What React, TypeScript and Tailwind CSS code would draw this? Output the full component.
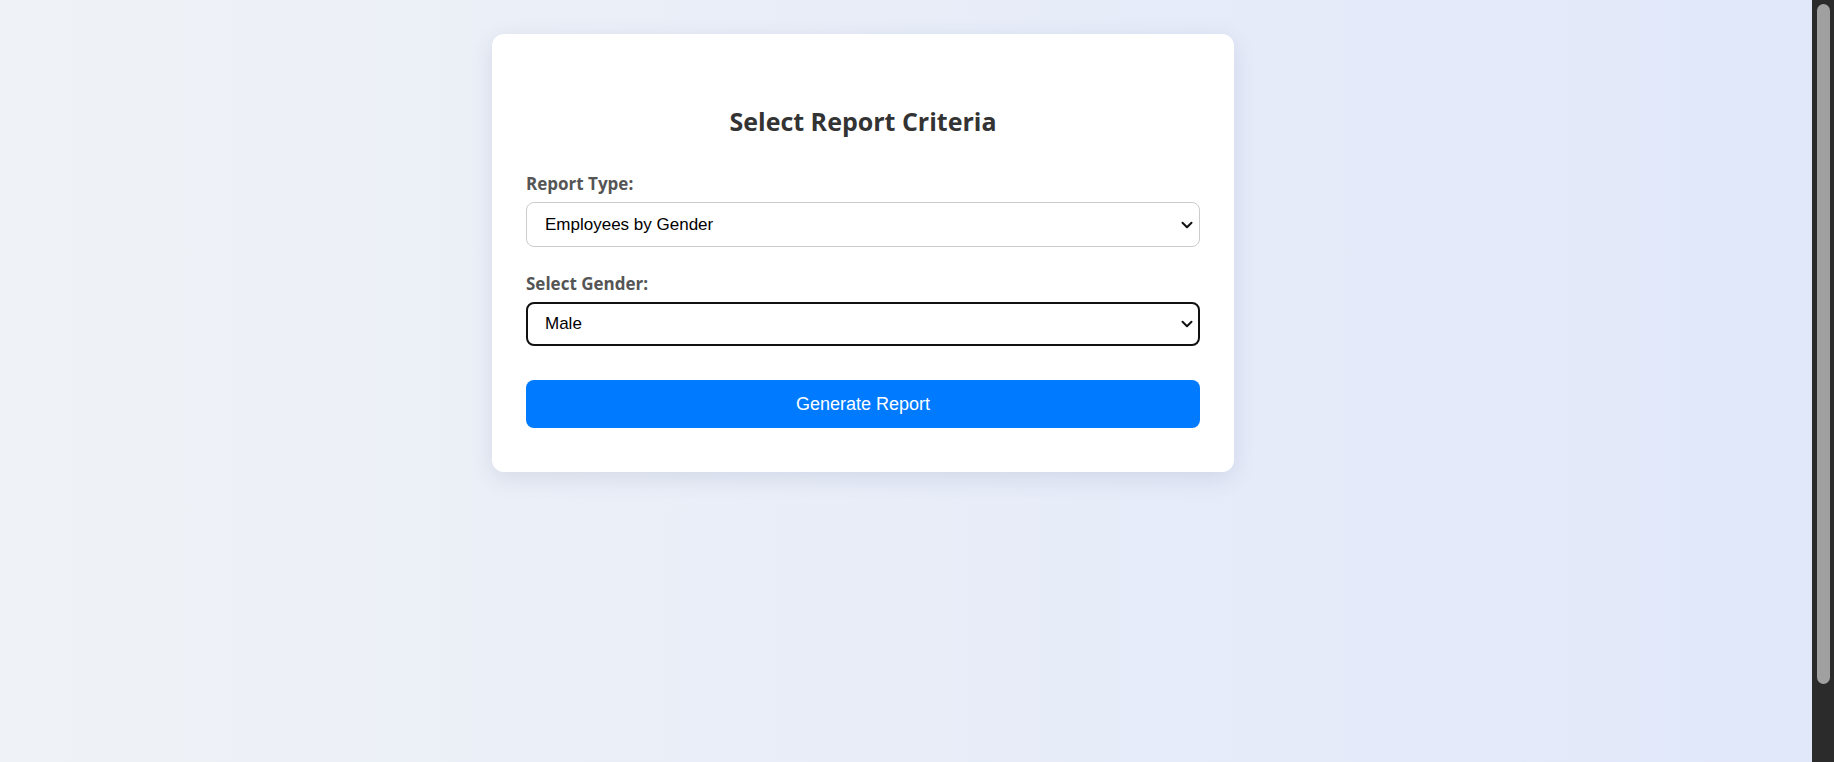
import { useState } from "react";

const Chevron = () => (
  <svg
    className="pointer-events-none absolute right-[7px] top-1/2 -translate-y-1/2"
    width="12"
    height="8"
    viewBox="0 0 12 8"
    fill="none"
  >
    <path d="M1.5 1.8 6 6.2 10.5 1.8" stroke="#111" strokeWidth="2" strokeLinecap="round" strokeLinejoin="round" />
  </svg>
);

const App = () => {
  const [reportType, setReportType] = useState("gender");
  const [gender, setGender] = useState("Male");

  return (
    <div className="flex h-screen overflow-hidden">
      <div className="flex-1 bg-linear-to-r from-[#eff2f6] to-[#e1e8fa] pt-[34px] font-['Open_Sans',sans-serif]">
        <div className="ml-[492px] w-[742px] rounded-xl bg-white px-[34px] pt-[71px] pb-[44px] shadow-[0_6px_22px_rgba(60,80,120,0.13)]">
          <h2 className="text-center text-[25px] leading-[32px] font-bold text-[#333]">
            Select Report Criteria
          </h2>

          <label className="mt-[35px] mb-[6px] block text-[17px] leading-[24px] font-bold text-[#555]">
            Report Type:
          </label>
          <div className="relative">
            <select
              value={reportType}
              onChange={(e) => setReportType(e.target.value)}
              className="block h-[45px] w-full appearance-none rounded-lg border border-[#ccc] bg-white pl-[18px] pr-[30px] font-['Liberation_Sans',Arial,sans-serif] text-[17px] text-black outline-none"
            >
              <option value="gender">Employees by Gender</option>
              <option value="department">Employees by Department</option>
              <option value="age">Employees by Age</option>
            </select>
            <Chevron />
          </div>

          <label className="mt-[25px] mb-[6px] block text-[17px] leading-[24px] font-bold text-[#555]">
            Select Gender:
          </label>
          <div className="relative">
            <select
              value={gender}
              onChange={(e) => setGender(e.target.value)}
              className="block h-[44px] w-full appearance-none rounded-lg border-2 border-[#111] bg-white pl-[17px] pr-[30px] font-['Liberation_Sans',Arial,sans-serif] text-[17px] text-black outline-none"
            >
              <option>Male</option>
              <option>Female</option>
            </select>
            <Chevron />
          </div>

          <button className="mt-[34px] block h-[48px] w-full rounded-lg bg-[#007bff] font-['Liberation_Sans',Arial,sans-serif] text-[18px] text-white">
            Generate Report
          </button>
        </div>
      </div>

      {/* scrollbar */}
      <div className="w-[22px] shrink-0 bg-[#2b2b2b] pt-[4px]">
        <div className="ml-[5px] h-[680px] w-[13px] rounded-full bg-[#a0a0a0]" />
      </div>
    </div>
  );
};

export default App;
